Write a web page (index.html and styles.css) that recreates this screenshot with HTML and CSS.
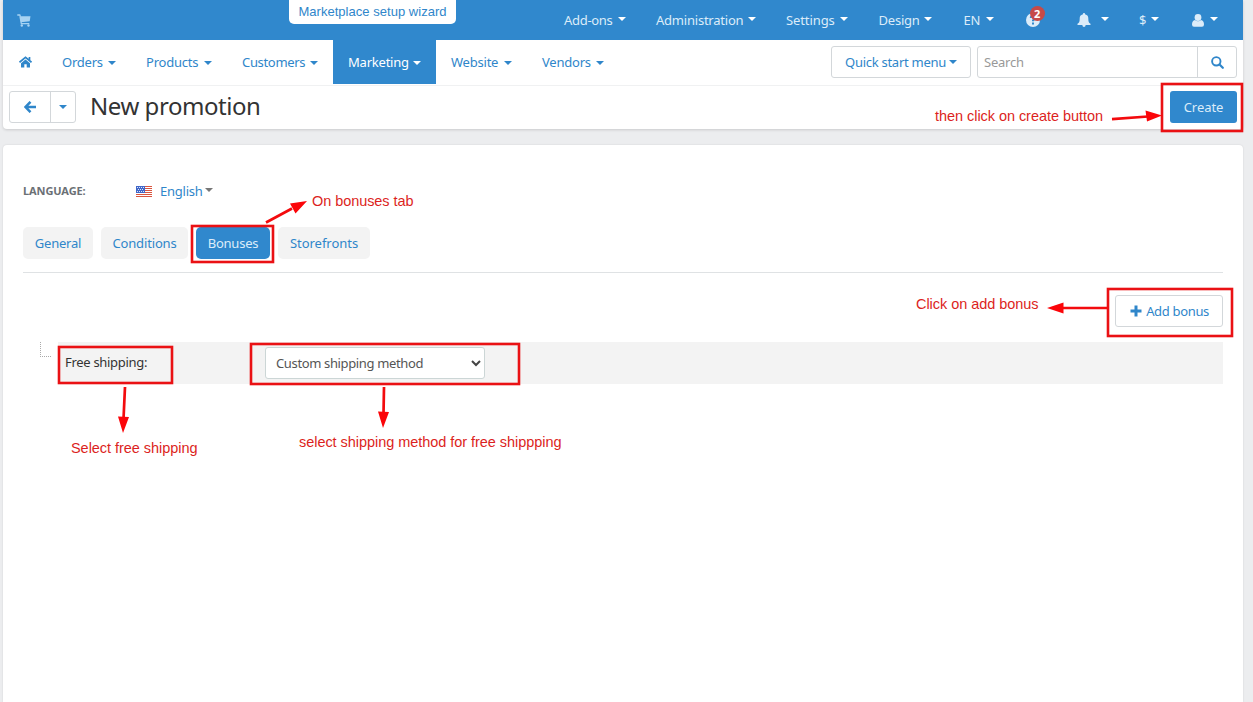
FILE: index.html
```html
<!DOCTYPE html>
<html lang="en">
<head>
<meta charset="utf-8">
<title>New promotion</title>
<link rel="stylesheet" href="styles.css">
</head>
<body>
<div class="page">
  <header class="header">
    <div class="topbar">
      <svg class="cart" width="14" height="13" viewBox="0 0 14 13"><path d="M.3 1h2.500l.5 1.300M3 2.300l1.300 7.400h8" fill="none" stroke="currentColor" stroke-width="1.300"/><path d="M3 2.200h10.500l-.8 5-8.700 1z" fill="currentColor"/><circle cx="4.800" cy="11.500" r="1.200" fill="currentColor"/><circle cx="11.500" cy="11.500" r="1.200" fill="currentColor"/></svg>
      <a class="wizard">Marketplace setup wizard</a>
      <nav class="topnav">
        <a class="t-addons"><span>Add-ons</span><i class="caret"></i></a>
        <a class="t-admin"><span>Administration</span><i class="caret"></i></a>
        <a class="t-settings"><span>Settings</span><i class="caret"></i></a>
        <a class="t-design"><span>Design</span><i class="caret"></i></a>
        <a class="t-lang"><span>EN</span><i class="caret"></i></a>
        <a class="t-help"><svg width="14" height="14" viewBox="0 0 14 14"><circle cx="7" cy="7" r="7" fill="currentColor"/><path d="M4.800 5q0-2 2.200-2t2.200 1.800Q9.200 6 7 7.300v1M7 9.500v2" fill="none" stroke="#3088cd" stroke-width="2"/></svg><b class="badge">2</b></a>
        <a class="t-bell"><svg width="14" height="14" viewBox="0 0 14 14"><path d="M7 0a1 1 0 0 1 1 1.200C10.600 1.800 11.300 3.500 11.300 5.500c0 3 .5 4.300 2.200 5.300v1.200H.5v-1.200C2.200 9.800 2.700 8.500 2.700 5.500c0-2 .7-3.700 3.300-4.300A1 1 0 0 1 7 0zM5.300 12h3.400Q8.500 14 7 14t-1.700-2z" fill="currentColor"/></svg><i class="caret"></i></a>
        <a class="t-money"><span>$</span><i class="caret"></i></a>
        <a class="t-user"><svg width="12" height="13" viewBox="0 0 12 13"><circle cx="6" cy="3.500" r="3.400" fill="currentColor"/><path d="M3 6q3 2.600 6 0 3 .6 3 4.500 0 2.300-2 2.300H2q-2 0-2-2.300Q0 6.600 3 6z" fill="currentColor"/></svg><i class="caret"></i></a>
      </nav>
    </div>
    <div class="mainbar">
      <nav class="mainnav">
        <a class="home"><svg width="13" height="12" viewBox="0 0 13 12"><path d="M.5 6.300 6.500 1.300l6 5M10.500 1v3.500" fill="none" stroke="currentColor" stroke-width="1.700"/><path d="M6.500 3.500 11 7.300V11.500H7.700V8.200H5.300v3.300H2V7.300z" fill="currentColor"/></svg></a>
        <a class="m-orders"><span>Orders</span><i class="caret"></i></a>
        <a class="m-products"><span>Products</span><i class="caret"></i></a>
        <a class="m-customers"><span>Customers</span><i class="caret"></i></a>
        <a class="m-marketing active"><span>Marketing</span><i class="caret"></i></a>
        <a class="m-website"><span>Website</span><i class="caret"></i></a>
        <a class="m-vendors"><span>Vendors</span><i class="caret"></i></a>
      </nav>
      <a class="quick btn"><span>Quick start menu</span><i class="caret"></i></a>
      <div class="search"><span class="field">Search</span><span class="go"><svg width="13" height="13" viewBox="0 0 13 13"><circle cx="5.300" cy="5.300" r="4.200" fill="none" stroke="currentColor" stroke-width="1.900"/><path d="m8.500 8.500 3.300 3.300" stroke="currentColor" stroke-width="2.200" stroke-linecap="round"/></svg></span></div>
    </div>
    <div class="titlebar">
      <div class="back"><a class="arrow"><svg width="12" height="12" viewBox="0 0 12 12"><path d="M6.500 .8 1.500 6l5 5.200M2 6h10" fill="none" stroke="currentColor" stroke-width="2.500"/></svg></a><a class="more"><i class="caret"></i></a></div>
      <h1>New promotion</h1>
      <a class="create">Create</a>
    </div>
  </header>
  <main class="content">
    <div class="language">
      <b>LANGUAGE:</b>
      <svg class="flag" width="16" height="11" viewBox="0 0 16 11"><path fill="#fff" d="M0 0h16v11H0z"/><path stroke="#d9553f" d="M0 .5h16M0 2.500h16M0 4.500h16M0 6.500h16M0 8.500h16M0 10.500h16"/><path fill="#4067c8" d="M0 0h9v7H0z"/><path stroke="#dce5fa" stroke-dasharray="1 1" d="M1 1.500h7M2 3.500h6M1 5.500h7"/></svg>
      <a><span>English</span><i class="caret"></i></a>
    </div>
    <nav class="tabs">
      <a class="tab-general">General</a>
      <a class="tab-conditions">Conditions</a>
      <a class="tab-bonuses active">Bonuses</a>
      <a class="tab-storefronts">Storefronts</a>
    </nav>
    <div class="actions"><a class="add btn"><svg width="12" height="12" viewBox="0 0 12 12"><path d="M6 .5v11M.5 6h11" stroke="currentColor" stroke-width="3"/></svg><span>Add bonus</span></a></div>
    <div class="bonus">
      <i class="branch"></i>
      <div class="row">
        <label>Free shipping:</label>
        <div class="select"><span>Custom shipping method</span><svg width="10" height="7" viewBox="0 0 10 7"><path d="m1 1 4 4 4-4" fill="none" stroke="#444" stroke-width="2"/></svg></div>
      </div>
    </div>
  </main>
</div>
<svg class="notes" width="1253" height="702" viewBox="0 0 1253 702">
  <g class="boxes">
    <rect x="1162" y="84" width="80" height="47"/>
    <rect x="192" y="226" width="81" height="36"/>
    <rect x="1108" y="289" width="124" height="47"/>
    <rect x="59" y="347" width="113" height="36"/>
    <rect x="251" y="344" width="268" height="40"/>
  </g>
  <path class="lines" d="M1112 119.200 1148 116.500M266 222.500 292 208.500M1108 308H1062M125 387 123.500 419M384 387 383.500 414"/>
  <path class="heads" d="M1162 115.500 1145.500 110.500 1147 121.500zM307 201 290 203.500 295.500 213.500zM1047 308 1063.500 302.500V313.500zM123 433 118 416.500 129 417zM383 428 378 411.500 389 412z"/>
  <g class="captions">
    <text x="935" y="121" textLength="168">then click on create button</text>
    <text x="312" y="206" textLength="101.500">On bonuses tab</text>
    <text x="916" y="309" textLength="122.500">Click on add bonus</text>
    <text x="71" y="453" textLength="126.500">Select free shipping</text>
    <text x="299" y="447" textLength="262.500">select shipping method for free shippping</text>
  </g>
</svg>
</body>
</html>
```
FILE: styles.css
```css
* { box-sizing: border-box; }
body { margin: 0; background: #ecedef; font: 13px/20px "Noto Sans", sans-serif; letter-spacing: -.22px; color: #333; overflow: hidden; }
a { color: #2f86ca; white-space: nowrap; }
svg { display: block; flex: none; }
.page { height: 702px; padding: 0 10px 0 3px; display: flex; flex-direction: column; }
.caret { flex: none; width: 0; height: 0; border: 4px solid transparent; border-top: 4.500px solid currentColor; border-bottom: 0; }
.btn { border: 1px solid #d3d7da; border-radius: 3px; background: #fff; }

.header { height: 129px; background: #fff; border-radius: 0 0 4px 4px; box-shadow: 0 1px 3px rgba(0,0,0,.15); }
.topbar { height: 40px; background: #3088cd; display: flex; position: relative; }
.cart { margin: 14px 0 0 14px; color: #a7d3f2; }
.wizard { width: 167px; height: 24px; margin-left: 258px; background: #fff; border-radius: 0 0 5px 5px; font: 13px/23px "Liberation Sans", sans-serif; text-align: center; letter-spacing: .03px; }
.topnav { margin-left: 108px; display: flex; height: 40px; }
.topnav a { color: #dcecf9; display: flex; align-items: center; height: 40px; position: relative; }
.topnav .caret { margin: -3px 0 0 auto; color: #fff; }
.t-addons { width: 62px; letter-spacing: -.3px; }
.t-admin { width: 100px; margin-left: 30px; }
.t-settings { width: 62px; margin-left: 30px; letter-spacing: -.1px; }
.t-design { width: 53px; margin-left: 30.500px; }
.t-lang { width: 30px; margin-left: 32px; }
.t-help { width: 20px; margin-left: 32px; }
.t-bell { width: 32px; margin-left: 31.500px; }
.t-money { width: 20px; margin-left: 30px; }
.t-user { width: 26px; margin-left: 33px; }
.badge { position: absolute; left: 4px; top: 6px; width: 15px; height: 15px; border-radius: 8px; background: #c64a48; color: #fff; font-size: 11px; line-height: 15px; text-align: center; }

.mainbar { height: 46px; display: flex; align-items: flex-start; border-bottom: 1px solid #f0f1f2; }
.mainnav { display: flex; width: 828px; }
.mainnav a { height: 44px; display: flex; align-items: center; padding: 0 15px; }
.mainnav .caret { margin-left: auto; margin-top: 2px; }
.mainnav .home { width: 44px; padding: 0 0 0 16px; }
.mainnav .m-orders { width: 84px; }
.mainnav .m-products { width: 96px; }
.mainnav .m-customers { width: 106px; letter-spacing: -.33px; }
.mainnav .m-marketing { width: 103px; }
.mainnav .m-website { width: 91px; }
.mainnav .m-vendors { width: 92px; }
.mainnav .active { background: #3088cd; color: #fff; }
.quick { width: 140px; height: 32px; margin-top: 6px; padding: 0 13px; display: flex; align-items: center; justify-content: space-between; letter-spacing: -.27px; }
.search { width: 260px; height: 32px; margin: 6px 0 0 6px; border: 1px solid #d3d7da; border-radius: 3px; display: flex; color: #999; line-height: 30px; }
.field { flex: 1; padding-left: 6px; }
.go { width: 39px; border-left: 1px solid #d3d7da; color: #2f86ca; display: flex; align-items: center; justify-content: center; }

.titlebar { height: 43px; display: flex; align-items: flex-start; padding: 5px 6px 0; }
.back { width: 67px; height: 32px; border: 1px solid #d3d7da; border-radius: 3px; display: flex; }
.back a { display: flex; align-items: center; justify-content: center; }
.arrow { width: 41px; border-right: 1px solid #d3d7da; }
.more { flex: 1; }
h1 { margin: -1px 0 0 14px; font-size: 24px; line-height: 32px; font-weight: 400; letter-spacing: -.45px; color: #333; }
.create { width: 67px; height: 32px; margin-left: auto; border-radius: 3px; background: #3088cd; color: #dcecf9; line-height: 32px; text-align: center; letter-spacing: -.05px; }

.content { flex: 1; margin-top: 16px; padding: 0 20px; background: #fff; border-radius: 4px 4px 0 0; box-shadow: 0 0 2px rgba(0,0,0,.12); }
.language { height: 82px; padding-top: 36px; display: flex; align-items: flex-start; }
.language b { width: 113px; font-size: 11px; letter-spacing: -.1px; color: #6b7075; }
.flag { margin-top: 5px; }
.language a { width: 53px; margin-left: 8px; display: flex; align-items: center; justify-content: space-between; }
.language .caret { color: #777; margin-top: -2px; }
.tabs { height: 46px; display: flex; border-bottom: 1px solid #dfe2e4; }
.tabs a { height: 32px; line-height: 32px; text-align: center; border-radius: 5px; background: #f3f3f3; margin-right: 8px; }
.tabs .tab-general { width: 70px; }
.tabs .tab-conditions { width: 87px; letter-spacing: -.15px; }
.tabs .tab-bonuses { width: 74px; }
.tabs .tab-storefronts { width: 92px; letter-spacing: -.03px; }
.tabs .active { background: #3088cd; color: #dcecf9; }
.actions { height: 69px; display: flex; justify-content: flex-end; padding-top: 22px; }
.add { width: 108px; height: 32px; padding: 0 13px 0 14px; display: flex; align-items: center; justify-content: space-between; letter-spacing: -.33px; }
.bonus { display: flex; align-items: flex-start; padding-left: 17px; }
.branch { width: 11px; height: 15px; border: 1px dotted #aaa; border-width: 0 0 1px 1px; }
.row { height: 42px; flex: 1; margin-left: 7px; background: #f3f3f3; display: flex; align-items: flex-start; }
.row label { width: 207px; padding: 10px 0 0 7px; letter-spacing: -.3px; }
.select { width: 220px; height: 32px; margin-top: 5px; padding: 0 3px 0 10px; border: 1px solid #ccd6d6; border-radius: 3px; background: #fff; color: #555; display: flex; align-items: center; justify-content: space-between; letter-spacing: -.36px; }

.notes { position: absolute; left: 0; top: 0; }
.boxes { fill: none; stroke: #ea1114; stroke-width: 2.600; }
.lines { stroke: #f30b0e; stroke-width: 2.700; fill: none; }
.heads { fill: #fb0509; }
.captions { font: 14.500px "Liberation Sans", sans-serif; letter-spacing: 0; fill: #dc1f22; }
```
